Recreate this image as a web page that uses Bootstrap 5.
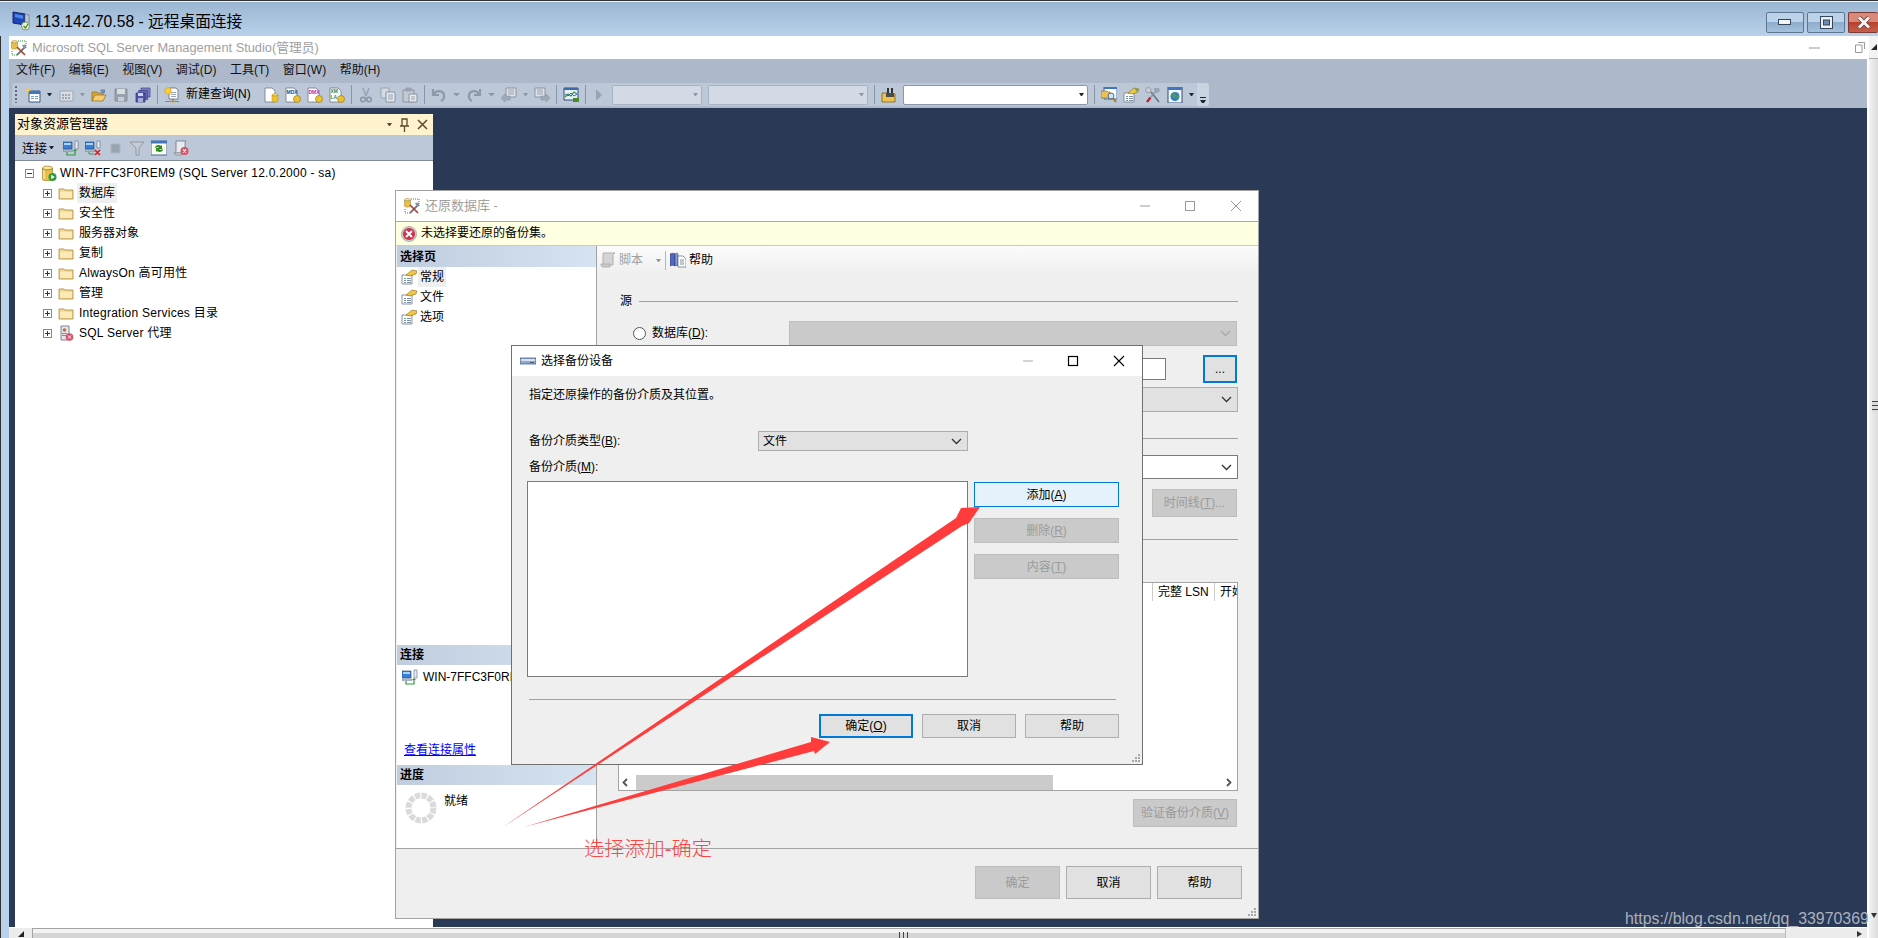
<!DOCTYPE html>
<html lang="zh-CN">
<head>
  <meta charset="UTF-8">
  <title>113.142.70.58 - 远程桌面连接</title>
  <link href="https://cdn.jsdelivr.net/npm/bootstrap@5.3.0/dist/css/bootstrap.min.css" rel="stylesheet">
  <style>
    html, body { height: 100%; }
    body {
      margin: 0; overflow: hidden; background: #b9d1ea; color: #000;
      font: 12px/1.2 "Liberation Sans", "Noto Sans CJK SC", sans-serif;
    }
    u { text-underline-offset: 1px; }
    .mh0 { min-height: 0; }
    .rdp-win { width: 1878px; height: 938px; border-top: 1px solid #333; position: relative; }
    .rdp-title {
      height: 35px; flex: none; padding-left: 12px; border-top: 1px solid #eef2f6;
      background: linear-gradient(#9bb6d2, #b9d1ea);
      font-size: 15.700px;
    }
    .rdp-title .t { margin-left: 4px; margin-top: 7px; }
    .rdp-title > svg { margin-top: 3px; }
    .rdp-btns { margin-top: 10px; align-self: flex-start; gap: 3px; }
    .rdp-b {
      width: 38px; height: 21px; border: 1px solid #5f7594; border-radius: 2px;
      background: linear-gradient(#bcd2e9 50%, #8fadcc 50%, #a4c0dc);
    }
    .rdp-b.x { width: 30px; border-right: 0; background: linear-gradient(#d9887a 50%, #b8422b 50%, #c5604c); border-color: #7c3a34; }
    .strip { width: 9px; flex: none; border-left: 1px solid #333; background: #b9d1ea; }
    .ssms { width: 1858px; flex: none; background: #fff; }
    .ssms-title { height: 23px; flex: none; padding-left: 2px; color: #a0a0a0; font-size: 12.800px; background: #fff; }
    .ssms-title .t { margin-left: 5px; }
    .ssms-ctl { margin-left: auto; gap: 35px; padding-right: 2px; }
    .mbar { height: 24px; flex: none; background: #adb9cb; padding-left: 7px; padding-bottom: 2px; color: #111; }
    .mbar span + span { margin-left: 13.500px; }
    .tbar-wrap { height: 25px; flex: none; background: #adb9cb; padding-left: 3px; padding-bottom: 2px; }
    .tbar { height: 23px; width: 1185px; background: #bcc7d8; padding-left: 3px; gap: 6px; border-radius: 3px 0 0 3px; }
    .tbar svg, .oe-tb svg { width: 16px; height: 16px; flex: none; }
    .grip { width: 4px; height: 17px; background: repeating-linear-gradient(#5e6a7d 0 2px, transparent 2px 4px); background-size: 2px 100%; background-repeat: no-repeat; }
    .dd { width: 5px; height: 3px; flex: none; border-left: 2.500px solid transparent; border-right: 2.500px solid transparent; border-top: 3px solid #1d2533; }
    .dd.off { border-top-color: #8d97a6; }
    .dd.brown { border-top-color: #5a4a2a; }
    .dd-w { width: 7px; border-width: 3px 3.500px 0; }
    .vsep { width: 1px; height: 19px; flex: none; background: #8793a6; }
    .qtxt { margin-right: 5px; width: 66px; white-space: nowrap; }
    .tb-play { margin-right: -2px; }
    .tcombo { height: 20px; width: 90px; flex: none; background: #d3dae5; border: 1px solid #a9b3c3; border-radius: 2px; padding-right: 3px; }
    .tcombo.c2 { width: 160px; }
    .tcombo.c3 { width: 185px; background: #fff; border-color: #8a96a9; }
    .tover { width: 12px; height: 23px; flex: none; background: #cad3e0; border-radius: 0 3px 3px 0; padding-bottom: 3px; }
    .tover i { display: block; width: 6px; height: 1px; background: #222; margin-bottom: 2px; }
    .tover i.dd { height: 3px; background: none; margin: 0; }
    .work { position: relative; background: #2a3956; padding: 6px 0 0 6px; min-height: 0; }
    .oe { width: 418px; height: 100%; background: #fff; }
    .oe-h { height: 21px; flex: none; background: #fff2cf; padding: 0 5px 0 2px; font-size: 13px; border-radius: 2px 2px 0 0; }
    .oe-h span { margin-top: -2px; }
    .oe-h .ctl { margin-left: auto; gap: 8px; }
    .oe-tb { height: 26px; flex: none; background: #bcc7d8; padding-left: 7px; gap: 6px; border-bottom: 1px solid #7f8a9b; font-size: 12.500px; }
    .oe-tb span { margin-top: 3px; }
    .oe-tb .dd { margin: 0 3px 0 -4px; }
    .oe-tree { padding: 2px 0 0 10px; margin: 0; list-style: none; }
    .oe-tree li { height: 20px; padding-left: 18px; gap: 6px; white-space: nowrap; }
    .oe-tree .pm { width: 9px; height: 9px; flex: none; }
    .oe-tree .fi { width: 16px; height: 16px; flex: none; margin-right: -1px; }
    .oe-tree li.root { padding-left: 0; gap: 7px; }
    .oe-tree li.root .fi { margin-right: -4px; }
    .oe-tree .ls { letter-spacing: .25px; }
    .sel-g { background: #efefef; padding: 3px 2px; margin-left: -2px; }
    .dlg { position: absolute; background: #efefef; }
    .dlg-rest { left: 386px; top: 82px; width: 864px; height: 729px; border: 1px solid #a3a3a3; }
    .dlg-title { height: 30px; flex: none; background: #fff; color: #a0a0a0; padding-left: 8px; font-size: 13px; }
    .dlg-title .t { margin-left: 5px; }
    .ctl-w { margin-left: auto; width: 140px; flex: none; }
    .ctl-w svg { width: 140px; height: 14px; flex: none; }
    .msg { height: 25px; flex: none; background: #ffffe1; border-top: 1px solid #a9a9a9; border-bottom: 1px solid #c9c9c9; padding-left: 5px; gap: 4px; }
    .msg svg { width: 16px; height: 16px; }
    .pages { width: 200px; flex: none; background: #fff; border-right: 1px solid #a3a3a3; margin-left: 1px; }
    .sec-h { height: 20px; flex: none; padding: 1px 0 0 3px; font-weight: 700; background: linear-gradient(90deg, #bfcddf, #d6e3f0); }
    .sec-h.top { height: 21px; }
    .pg { height: 20px; padding-left: 4px; gap: 3px; }
    .pg svg { width: 16px; height: 16px; flex: none; }
    .pg-sel { background: #efefef; padding: 3px 2px; margin-left: -2px; }
    .box-conn { height: 100px; flex: none; }
    .box-conn .pg { margin-top: 2px; padding-left: 5px; white-space: nowrap; gap: 5px; }
    .box-conn a { color: #00f; margin: auto 0 8px 7px; }
    .box-prog { height: 63px; flex: none; padding: 7px 0 0 8px; gap: 7px; }
    .box-prog svg { width: 32px; height: 32px; }
    .box-prog span { margin-top: 2px; }
    .rpane { min-width: 0; padding-right: 20px; }
    .rtb {
      height: 28px; flex: none; margin-right: -20px; gap: 3px; padding-left: 3px; color: #a0a0a0;
      background: linear-gradient(#fbfbfb, #efefef);
    }
    .rtb svg { width: 16px; height: 16px; flex: none; }
    .rtb .dd { margin: 0 1px 0 10px; }
    .rtb .vsep { background: #b5b5b5; margin-right: 1px; }
    .rtb .on { color: #000; }
    .grp { height: 18px; margin: 18px 0 0 23px; gap: 7px; flex: none; }
    .grp i { flex: 1; height: 1px; background: #a0a0a0; }
    .frow { flex: none; }
    .r1 { height: 25px; margin-top: 11px; padding-left: 36px; }
    .fradio { width: 13px; height: 13px; flex: none; margin: 0 6px 0 0; background: #fff; border: 1px solid #555; }
    .form-check-input.fradio:disabled { opacity: 1; }
    .r1 .flab { width: 137px; flex: none; }
    .r1 .wsel { width: 448px; flex: none; }
    .wsel {
      height: 25px; padding: 0 4px; border-radius: 0; font-size: 12px; color: #000; box-shadow: none;
      background-color: #e1e1e1; border: 1px solid #adadad; background-position: right 5px center; background-size: 11px 7px;
      background-image: url("data:image/svg+xml,%3csvg xmlns='http://www.w3.org/2000/svg' viewBox='0 0 11 7'%3e%3cpath d='M1 1l4.500 4.500L10 1' fill='none' stroke='%23333' stroke-width='1.300'/%3e%3c/svg%3e");
    }
    .wsel.off, .wsel:disabled {
      background-color: #cacaca; border-color: #bdbdbd;
      background-image: url("data:image/svg+xml,%3csvg xmlns='http://www.w3.org/2000/svg' viewBox='0 0 11 7'%3e%3cpath d='M1 1l4.500 4.500L10 1' fill='none' stroke='%23a8a8a8' stroke-width='1.300'/%3e%3c/svg%3e");
    }
    .wsel.lit { background-color: #fff; border-color: #7a7a7a; }
    .r2 { height: 28px; margin-top: 9px; }
    .txtb { width: 377px; height: 22px; margin-left: 192px; background: #fff; border: 1px solid #7a7a7a; border-radius: 0; padding: 0; flex: none; min-height: 0; }
    .wbtn {
      --bs-btn-padding-y: 0; --bs-btn-padding-x: 0; --bs-btn-font-size: 12px; --bs-btn-line-height: 1;
      --bs-btn-border-radius: 0; --bs-btn-color: #000; --bs-btn-bg: #e1e1e1; --bs-btn-border-color: #adadad;
      --bs-btn-disabled-opacity: 1; --bs-btn-disabled-bg: #cacaca; --bs-btn-disabled-border-color: #bdbdbd; --bs-btn-disabled-color: #9a9a9a;
      font-family: inherit; flex: none;
    }
    .wbtn.focus-b { border: 2px solid #0078d7; }
    .wbtn.hot { background: #e5f1fb; border-color: #0078d7; }
    .dots { width: 34px; height: 28px; margin-left: 37px; line-height: 18px; }
    .r3 { height: 25px; margin-top: 4px; margin-left: 192px; }
    .r4 { height: 1px; margin: 26px 0 0 23px; background: #a0a0a0; }
    .r5 { height: 24px; margin: 16px 0 0 192px; }
    .r6 { margin-top: 10px; height: 28px; }
    .tl { width: 85px; height: 28px; margin-left: auto; margin-right: 1px; }
    .r7 { height: 1px; margin: 22px 0 0 23px; background: #a0a0a0; }
    .tb-b { height: 209px; margin: 42px 0 0 21px; background: #fff; border: 1px solid #a3a3a3; }
    .tb-head { height: 18px; flex: none; padding-left: 533px; white-space: nowrap; overflow: hidden; }
    .tb-head span { border-left: 1px solid #ccc; padding-left: 5px; height: 100%; flex: none; }
    .tb-head .lsn { width: 62px; }
    .tb-sc { height: 15px; margin-top: auto; flex: none; margin-bottom: 0; padding: 0 5px 0 3px; }
    .tb-sc .th { width: 417px; height: 15px; background: #cbcbcb; margin-left: 8px; flex: none; }
    .tb-sc svg { width: 6px; height: 9px; flex: none; }
    .r8 { height: 28px; margin-top: 8px; }
    .ver { width: 104px; height: 28px; margin-left: auto; margin-right: 1px; }
    .dlg-foot { height: 70px; flex: none; border-top: 1px solid #a3a3a3; gap: 6px; padding: 17px 16px 0 0; position: relative; }
    .dlg-foot .wbtn { width: 85px; height: 33px; }
    .rs-grip { position: absolute; right: 1px; bottom: 1px; width: 10px; height: 10px; }
    .dlg-inner { left: 115px; top: 154px; width: 632px; height: 420px; border: 1px solid #707070; }
    .dlg-inner .dlg-title { color: #000; height: 30px; font-size: 12px; }
    .dlg-inner .body-p { padding: 0 23px 0 17px; }
    .l1 { margin-top: 12px; height: 14px; }
    .l2 { margin-top: 29px; height: 20px; }
    .l2 .flab2 { width: 229px; }
    .l2 .wsel { width: 210px; height: 20px; min-height: 0; line-height: 1; }
    .l3 { margin-top: 10px; height: 13px; line-height: 13px; }
    .l4 { margin-top: 7px; margin-left: -2px; gap: 6px; height: 196px; }
    .dlist { width: 441px; background: #fff; border: 1px solid #7a7a7a; border-radius: 0; }
    .sidebtns { width: 145px; gap: 11px; padding-top: 1px; }
    .sidebtns .wbtn { height: 25px; }
    .l5 { margin-top: 22px; height: 1px; background: #a0a0a0; margin-right: 3px; }
    .l6 { margin-top: 14px; gap: 9px; justify-content: flex-end; }
    .l6 .wbtn { width: 94px; height: 24px; }
    .rsb { width: 11px; flex: none; background: #fff; padding-left: 2px; }
    .rsb-in { height: 100%; background: linear-gradient(90deg, #f2f2f2, #dcdcdc); position: relative; }
    .rsb-top { height: 23px; background: #f2f2f2; border-bottom: 1px solid #aaa; padding: 8px 0 0 2px; }
    .rsb-gr { position: absolute; top: 365px; left: 3px; width: 6px; height: 11px; background: repeating-linear-gradient(#444 0 1px, #ddd 1px 4px); }
    .tri-up { width: 0; height: 0; border-left: 6px solid transparent; border-bottom: 6px solid #222; }
    .tri-dn { position: absolute; top: 877px; left: 2px; width: 0; height: 0; border-left: 3px solid transparent; border-right: 3px solid transparent; border-top: 5px solid #333; }
    .bsb { height: 11px; flex: none; border-top: 1px solid #fff; background: #ececec; position: relative; }
    .bsb-corner { width: 23px; flex: none; background: #ececec; padding: 3px 0 0 9px; }
    .bsb-corner .c { width: 0; height: 0; border-right: 6px solid #222; border-top: 6px solid transparent; }
    .bsb-th { width: 1754px; flex: none; border: 1px solid #a4a4a4; border-bottom: 0; border-right-color: #bbb; background: linear-gradient(#f2f2f2 40%, #d5d5d5 40%); padding-left: 866px; padding-top: 3px; }
    .bsb-th i { display: block; width: 9px; height: 7px; background: repeating-linear-gradient(90deg, #444 0 1px, transparent 1px 4px); }
    .bsb-end { padding: 3px 5px 0 0; margin-left: auto; }
    .bsb-end i { display: block; width: 0; height: 0; border-left: 5px solid #333; border-top: 3px solid transparent; border-bottom: 3px solid transparent; }
    .overlay { position: absolute; left: 0; top: -1px; width: 1878px; height: 938px; pointer-events: none; }
    .note { position: absolute; left: 584px; top: 835px; font-size: 20.200px; line-height: 26px; color: #ff4242; font-weight: 300; white-space: nowrap; }
    .wm { position: absolute; left: 1625px; top: 908px; font-size: 15.900px; line-height: 20px; color: #aab1bd; white-space: nowrap; }
  </style>
</head>
<body>
<svg class="d-none" xmlns="http://www.w3.org/2000/svg">
  <symbol id="i-folder" viewBox="0 0 16 16"><path d="M1 4h5l1 1h8v9H1z" fill="#f5d98f" stroke="#a8873e" stroke-width=".8"/><path d="M2 7h12v6H2z" fill="#fbe9b7"/></symbol>
  <symbol id="i-new" viewBox="0 0 16 16"><path d="M4 4h11v11H4z" fill="#fff" stroke="#345a8c"/><path d="M4 4h11v3H4z" fill="#3f76c4"/><path d="M6 9h3v1H6zM6 11h3v1H6zM10 9h3v1h-3zM10 11h3v1h-3z" fill="#7c9cc4"/><path d="M3 0l1 2 2 1-2 1-1 2-1-2-2-1 2-1z" fill="#f6cf3c"/></symbol>
  <symbol id="i-grid" viewBox="0 0 16 16"><path d="M2 4h13v10H2z" fill="#d9dee6" stroke="#a0a7b3"/><path d="M4 7h2v2H4zM7 7h2v2H7zM10 7h2v2h-2zM4 10h2v2H4zM7 10h2v2H7zM10 10h2v2h-2z" fill="#a0a7b3"/></symbol>
  <symbol id="i-open" viewBox="0 0 16 16"><path d="M1 5h5l1 1h5v3H4L1 14z" fill="#d9a83a" stroke="#8a6a22" stroke-width=".7"/><path d="M1 14l3-6h11l-3 6z" fill="#f4cf72" stroke="#8a6a22" stroke-width=".7"/><path d="M9 4c1-2 3-2 4-1l1-1v4h-4l1-1c-.5-1-1.500-1-2-1z" fill="#6f87a8"/></symbol>
  <symbol id="i-save" viewBox="0 0 16 16"><path d="M2 2h12v12H2z" fill="#98a1ae" stroke="#7d8693" stroke-width=".8"/><path d="M4 2h8v5H4z" fill="#d8dde4"/><path d="M5 10h6v4H5z" fill="#c6ccd5"/></symbol>
  <symbol id="i-saveall" viewBox="0 0 16 16"><path d="M6 1h9v9H6z" fill="#7a7fc4" stroke="#3f4388" stroke-width=".7"/><path d="M3.500 3.500h9v9h-9z" fill="#6268b4" stroke="#3f4388" stroke-width=".7"/><path d="M1 6h9v9H1z" fill="#4f55a5" stroke="#2d3072" stroke-width=".7"/><path d="M3 6h5v3H3z" fill="#cfd2ee"/><path d="M3 11h5v4H3z" fill="#a8abd8"/></symbol>
  <symbol id="i-newq" viewBox="0 0 16 16"><path d="M5 1h7l2 2v9H5z" fill="#fff" stroke="#5d6a7f" stroke-width=".8"/><path d="M7 5h5v1H7zM7 7h5v1H7zM7 9h5v1H7z" fill="#9aa6b8"/><circle cx="4" cy="4" r="3.300" fill="#f5cf3e" stroke="#d8941e" stroke-width=".6"/><path d="M1 14.500h14" stroke="#a8873e"/><path d="M9 12v2.500" stroke="#5d6a7f"/><circle cx="9" cy="14.500" r="1.200" fill="#d8941e"/></symbol>
  <symbol id="i-docdb" viewBox="0 0 16 16"><path d="M2 1h7l3 3v11H2z" fill="#fff" stroke="#6e7888" stroke-width=".8"/><ellipse cx="12" cy="8" rx="3" ry="1.300" fill="#f7e07a" stroke="#a8871c" stroke-width=".5"/><path d="M9 8v6c0 1.500 6 1.500 6 0V8c0 1.300-6 1.300-6 0z" fill="#eec22e" stroke="#a8871c" stroke-width=".5"/></symbol>
  <symbol id="i-mdx" viewBox="0 0 16 16"><path d="M1 1h8l3 3v11H1z" fill="#fff" stroke="#6e7888" stroke-width=".8"/><text x="1.500" y="7" font-size="5" font-weight="700" font-family="Liberation Sans" fill="#20468c">MDX</text><circle cx="12" cy="12" r="3.500" fill="#eec22e" stroke="#8a6f12" stroke-width=".6"/></symbol>
  <symbol id="i-dmx" viewBox="0 0 16 16"><path d="M1 1h8l3 3v11H1z" fill="#fff" stroke="#6e7888" stroke-width=".8"/><text x="1.500" y="7" font-size="5" font-weight="700" font-family="Liberation Sans" fill="#b02eb0">DMX</text><circle cx="12" cy="12" r="3.500" fill="#eec22e" stroke="#8a6f12" stroke-width=".6"/></symbol>
  <symbol id="i-xml" viewBox="0 0 16 16"><path d="M1 1h8l3 3v11H1z" fill="#fff" stroke="#6e7888" stroke-width=".8"/><text x="1.500" y="6" font-size="5" font-weight="700" font-family="Liberation Sans" fill="#1a8a5a">XM</text><text x="1.500" y="11.500" font-size="5" font-weight="700" font-family="Liberation Sans" fill="#1a8a5a">LA</text><circle cx="12" cy="12" r="3.500" fill="#eec22e" stroke="#8a6f12" stroke-width=".6"/></symbol>
  <symbol id="i-cut" viewBox="0 0 16 16"><path d="M5 1l3 8M11 1L8 9" stroke="#9aa3b0" stroke-width="1.600" fill="none"/><circle cx="5" cy="12.500" r="2.300" fill="none" stroke="#8a93a0" stroke-width="1.500"/><circle cx="11" cy="12.500" r="2.300" fill="none" stroke="#8a93a0" stroke-width="1.500"/></symbol>
  <symbol id="i-copy" viewBox="0 0 16 16"><path d="M1 1h8v10H1z" fill="#d5dae2" stroke="#9aa3b0"/><path d="M6 5h9v10H6z" fill="#e6e9ee" stroke="#8a93a0"/><path d="M8 8h5M8 10h5M8 12h5" stroke="#9aa3b0"/></symbol>
  <symbol id="i-paste" viewBox="0 0 16 16"><path d="M1 3h11v12H1z" fill="#c4cad4" stroke="#8a93a0"/><path d="M4 1h5v3H4z" fill="#a2aab6" stroke="#8a93a0" stroke-width=".7"/><path d="M7 7h8v8H7z" fill="#e6e9ee" stroke="#8a93a0"/><path d="M9 10h4M9 12h4" stroke="#9aa3b0"/></symbol>
  <symbol id="i-undo" viewBox="0 0 16 16"><path d="M2 2v6h6M3 7c2-4 9-4 10 1 .5 3-1 5-3 6" fill="none" stroke="#8f98a6" stroke-width="2.200"/></symbol>
  <symbol id="i-redo" viewBox="0 0 16 16"><path d="M14 2v6H8M13 7c-2-4-9-4-10 1-.5 3 1 5 3 6" fill="none" stroke="#8f98a6" stroke-width="2.200"/></symbol>
  <symbol id="i-back" viewBox="0 0 16 16"><path d="M5 1h10v9H5z" fill="#dfe3ea" stroke="#8a93a0"/><path d="M7 3h6M7 5h6M7 7h6" stroke="#9aa3b0"/><path d="M0 11l4-4v2h5v4H4v2z" fill="#a2aab6" stroke="#858e9b" stroke-width=".5"/></symbol>
  <symbol id="i-fwd" viewBox="0 0 16 16"><path d="M1 1h10v9H1z" fill="#dfe3ea" stroke="#8a93a0"/><path d="M3 3h6M3 5h6M3 7h6" stroke="#9aa3b0"/><path d="M16 11l-4-4v2H7v4h5v2z" fill="#a2aab6" stroke="#858e9b" stroke-width=".5"/></symbol>
  <symbol id="i-chart" viewBox="0 0 16 16"><path d="M1 1h14v12H1z" fill="#e9f1f6" stroke="#2e4f7a"/><path d="M1 1h14v2H1z" fill="#3c6aa8"/><path d="M2 10l3-3 3 2 3-4 3 2" fill="none" stroke="#2a9a3a" stroke-width="1.200"/><path d="M2 7l3 2 3-3 3 3 3-2" fill="none" stroke="#3a6ac0"/><path d="M10 11h6v4h-6z" fill="#4a8a2a"/></symbol>
  <symbol id="i-play" viewBox="0 0 16 16"><path d="M4 2l6 6-6 6z" fill="#9aa3b0"/></symbol>
  <symbol id="i-bino" viewBox="0 0 16 16"><path d="M1 6h5l1 1h7v8H1z" fill="#eec04f" stroke="#7a5e1e" stroke-width=".8"/><path d="M6 1h2v8H6zM10 1h2v8h-2z" fill="#333"/><path d="M5 6h4v4H5zM9 6h4v4H9z" fill="#4a4a4a"/></symbol>
  <symbol id="i-find" viewBox="0 0 16 16"><path d="M3 0h13v12H3z" fill="#fff" stroke="#3a66a8"/><path d="M3 0h13v2H3z" fill="#3f76c4"/><path d="M0 4h6l1 1h2v6H0z" fill="#eec04f" stroke="#8a6a22" stroke-width=".6"/><circle cx="10" cy="9" r="3" fill="#cfe4f7" stroke="#4a6a8a"/><path d="M12 11l3 4" stroke="#a87a2a" stroke-width="2"/></symbol>
  <symbol id="i-prop" viewBox="0 0 16 16"><path d="M1 6h10v9H1z" fill="#fff" stroke="#6e7888" stroke-width=".8"/><path d="M3 9h2v1H3zM6 9h4v1H6zM3 11h2v1H3zM6 11h4v1H6zM3 13h2v1H3zM6 13h4v1H6z" fill="#7c8ea8"/><path d="M5 6l6-5 5 1-1 3-6 2z" fill="#efc840" stroke="#8a6a22" stroke-width=".6"/><path d="M11 1l5 1-2 3z" fill="#7ba050"/></symbol>
  <symbol id="i-tools" viewBox="0 0 16 16"><path d="M14 15L6 5" stroke="#6a7482" stroke-width="1.600"/><path d="M2 15l3.500-4.500" stroke="#b8252a" stroke-width="2.400"/><path d="M6 10l5-6" stroke="#8a93a0" stroke-width="1.400"/><path d="M9 1h5l1 3-3 2-3-3z" fill="#9aa3b0"/><path d="M2 1c2-1 4 0 4 3l-2 2-3-1c-1-2 0-3 1-4z" fill="#c8ced7" stroke="#6a7482" stroke-width=".5"/></symbol>
  <symbol id="i-web" viewBox="0 0 16 16"><path d="M1 0h14v16H1z" fill="#f3f6fa" stroke="#2e4f7a"/><path d="M1 0h14v3H1z" fill="#3f76c4"/><circle cx="8" cy="9.500" r="4.500" fill="#2f7fc0"/><path d="M5 7l3-1 1 3-2 3-1-2zM9 10l2-2 1 2-2 2z" fill="#4fa04a"/></symbol>
  <symbol id="i-conn" viewBox="0 0 16 16"><path d="M0 2h9v7H0z" fill="#3a7fd5" stroke="#2e4f7a" stroke-width=".7"/><path d="M1 3h7v2H1z" fill="#a8d2f5"/><path d="M0 10h10v1.500H0z" fill="#bfc7d2" stroke="#5d6a7f" stroke-width=".4"/><path d="M12 1h3v8h-3z" fill="#e8ebf0" stroke="#5d6a7f" stroke-width=".6"/><path d="M4 12v3h8v-4" fill="none" stroke="#2f9a3a" stroke-width="1.200"/><path d="M10 11l2-2 2 2z" fill="#2f9a3a"/></symbol>
  <symbol id="i-disc" viewBox="0 0 16 16"><path d="M0 2h9v7H0z" fill="#3a7fd5" stroke="#2e4f7a" stroke-width=".7"/><path d="M1 3h7v2H1z" fill="#a8d2f5"/><path d="M0 10h10v1.500H0z" fill="#bfc7d2" stroke="#5d6a7f" stroke-width=".4"/><path d="M12 1h3v7h-3z" fill="#e8ebf0" stroke="#5d6a7f" stroke-width=".6"/><path d="M4 12v2h5" fill="none" stroke="#2f9a3a"/><path d="M10 10l5 5M15 10l-5 5" stroke="#d81c1c" stroke-width="1.600"/></symbol>
  <symbol id="i-stop" viewBox="0 0 16 16"><path d="M4 4h9v9H4z" fill="#9aa3b0" stroke="#adb5c1"/></symbol>
  <symbol id="i-funnel" viewBox="0 0 16 16"><path d="M1 2h14L10 8v7H7V8z" fill="#c6ccd5" stroke="#8f98a6"/></symbol>
  <symbol id="i-refresh" viewBox="0 0 16 16"><path d="M0 1h16v14H0z" fill="#fdfde9" stroke="#3a66a8"/><path d="M0 1h16v2.500H0z" fill="#3f76c4"/><path d="M4 8c0-3 4-4 6-2l1-1v4H7l1-1c-1-1-2-1-4 0z" fill="#2f8a2a"/><path d="M12 9c0 3-4 4-6 2l-1 1V8h4l-1 1c1 1 2 1 4 0z" fill="#2f8a2a"/></symbol>
  <symbol id="i-scrx" viewBox="0 0 16 16"><path d="M3 1h10c-1 1-1 2-1 3v9H2c1-1 1-2 1-3z" fill="#e8ebf0" stroke="#6a7482" stroke-width=".8"/><path d="M1 13h8v2H3c-1 0-2-1-2-2z" fill="#d2d7df" stroke="#6a7482" stroke-width=".6"/><circle cx="11.500" cy="11" r="4" fill="#d9506a"/><path d="M10 9.500l3 3M13 9.500l-3 3" stroke="#fff" stroke-width="1.200"/></symbol>
  <symbol id="i-srv" viewBox="0 0 16 16"><ellipse cx="6.500" cy="3" rx="5" ry="2" fill="#f8e49a" stroke="#99802a" stroke-width=".7"/><path d="M1.500 3v11c0 2.500 10 2.500 10 0V3c0 2.500-10 2.500-10 0z" fill="#e8bf4a" stroke="#99802a" stroke-width=".7"/><path d="M3 5v9" stroke="#f8e49a" stroke-width="1.500"/><circle cx="11.500" cy="12" r="4" fill="#2f9a3a"/><path d="M10.300 9.800l3.400 2.200-3.400 2.200z" fill="#fff"/></symbol>
  <symbol id="i-agent" viewBox="0 0 16 16"><path d="M3 1h8v14H3z" fill="#e3e7ee" stroke="#5d6a7f" stroke-width=".8"/><circle cx="6.500" cy="5" r="1.800" fill="#c76a30"/><path d="M4 8h5v1H4zM4 10h5v1H4z" fill="#7c8ea8"/><circle cx="11.500" cy="12" r="3.800" fill="#d9506a"/><path d="M10 10.500l3 3M13 10.500l-3 3" stroke="#fff"/></symbol>
  <symbol id="i-ssms" viewBox="0 0 16 16"><path d="M7 1h1M9 1h1M11 1h1M13 1h1M15 1v1M15 3v1M15 5v1M15 7v1M1 11v1M1 13v1M1 15h1M3 15h1M5 15h1" stroke="#2f9a3a" stroke-width="1"/><ellipse cx="3.500" cy="1.800" rx="3" ry="1.300" fill="#f8e49a" stroke="#99802a" stroke-width=".5"/><path d="M.5 2v6c0 1.500 6 1.500 6 0V2c0 1.300-6 1.300-6 0z" fill="#e8bf4a" stroke="#99802a" stroke-width=".5"/><path d="M6 15l8-8" stroke="#777" stroke-width="1.800"/><path d="M14 15L6 7" stroke="#a83a2a" stroke-width="1.600"/><path d="M11 5l4-.5L15 8l-2 1z" fill="#8a93a0"/></symbol>
  <symbol id="i-pg" viewBox="0 0 16 16"><path d="M1 6h10v9H1z" fill="#fff" stroke="#6e7888" stroke-width=".8"/><path d="M3 9h2v1H3zM6 9h4v1H6zM3 11h2v1H3zM6 11h4v1H6zM3 13h2v1H3zM6 13h4v1H6z" fill="#7c8ea8"/><path d="M5 6l6-5 5 1-1 3-6 2z" fill="#efc840" stroke="#8a6a22" stroke-width=".6"/></symbol>
  <symbol id="i-err" viewBox="0 0 16 16"><circle cx="8" cy="8" r="7.600" fill="#c9c9c9" stroke="#8a8a8a" stroke-width=".5"/><circle cx="8" cy="8" r="6" fill="#cc3347"/><path d="M5 5l6 6M11 5l-6 6" stroke="#fff" stroke-width="2"/></symbol>
  <symbol id="i-scr" viewBox="0 0 16 16"><path d="M3 1h12c-1.500 1-2 2-2 3v9H2c1-1 1-2 1-3z" fill="#d4d4d4" stroke="#b0b0b0"/><path d="M1 12h9v3H3c-1 0-2-1-2-3z" fill="#cacaca" stroke="#b0b0b0"/></symbol>
  <symbol id="i-help" viewBox="0 0 16 16"><path d="M0 2c2-1 4-1 5 0v12c-1-1-3-1-5 0z" fill="#5568b8" stroke="#2d3a80" stroke-width=".6"/><path d="M5 2c1-1 2-1 3 0v12c-1-1-2-1-3 0z" fill="#8a98d8" stroke="#2d3a80" stroke-width=".6"/><path d="M8 4h5l3 3v8H8z" fill="#fff" stroke="#5d6a7f" stroke-width=".7"/><path d="M10 8h4M10 10h4M10 12h4" stroke="#7c8ea8"/></symbol>
  <symbol id="i-dev" viewBox="0 0 16 16"><path d="M0 5h16v6H0z" fill="#8fa8cc" stroke="#47628c" stroke-width=".8"/><path d="M1 6h14v2H1z" fill="#d5e0ef"/><path d="M10 9h4v1h-4z" fill="#47628c"/></symbol>
  <symbol id="i-plus" viewBox="0 0 9 9"><rect x=".5" y=".5" width="8" height="8" fill="#fff" stroke="#888"/><path d="M2 4.500h5M4.500 2v5" stroke="#333"/></symbol>
  <symbol id="i-grip" viewBox="0 0 10 10"><path d="M7 1h2v2H7zM4 4h2v2H4zM7 4h2v2H7zM1 7h2v2H1zM4 7h2v2H4zM7 7h2v2H7z" fill="#a8a8a8"/></symbol>
</svg>

<div class="rdp-win d-flex flex-column">
  <div class="rdp-title d-flex align-items-center">
    <svg width="19" height="20" viewBox="0 0 19 20"><path d="M1 1l12 2v11L1 12z" fill="#1f45b8" stroke="#112766"/><path d="M3 3l8 1.500V8L3 6z" fill="#4f86e8"/><path d="M13 3l4 1v11l-4-1z" fill="#bcc6d6" stroke="#5d6a7f" stroke-width=".6"/><circle cx="13.500" cy="15" r="4" fill="#eef2e4" stroke="#7a9a5a"/><path d="M11.500 15l2 2 2.500-4" fill="none" stroke="#3d8a2a" stroke-width="1.300"/></svg>
    <span class="t">113.142.70.58 - 远程桌面连接</span>
    <div class="rdp-btns d-flex ms-auto">
      <div class="rdp-b d-flex align-items-center justify-content-center"><svg width="14" height="7" viewBox="0 0 14 7"><rect x=".5" y=".5" width="12" height="5" fill="#f4f4f4" stroke="#33465f"/></svg></div>
      <div class="rdp-b d-flex align-items-center justify-content-center"><svg width="13" height="13" viewBox="0 0 13 13"><rect x=".5" y=".5" width="12" height="12" fill="#eee" stroke="#33465f"/><rect x="3.500" y="4" width="6" height="5" fill="#6f8ab0" stroke="#33465f"/></svg></div>
      <div class="rdp-b x d-flex align-items-center justify-content-center"><svg width="14" height="13" viewBox="0 0 14 13"><path d="M2 1.500l10 10M12 1.500l-10 10" stroke="#5b3a3a" stroke-width="4.400"/><path d="M2 1.500l10 10M12 1.500l-10 10" stroke="#f4f4f4" stroke-width="3"/></svg></div>
    </div>
  </div>

  <div class="d-flex flex-grow-1 mh0">
    <div class="strip"></div>
    <div class="ssms d-flex flex-column">
      <div class="ssms-title d-flex align-items-center">
        <svg width="16" height="16"><use href="#i-ssms"/></svg>
        <span class="t">Microsoft SQL Server Management Studio(管理员)</span>
        <div class="ssms-ctl d-flex align-items-center">
          <svg width="11" height="2" viewBox="0 0 11 2"><path d="M0 1h11" stroke="#999"/></svg>
          <svg width="10" height="11" viewBox="0 0 10 11"><path d="M3 .5h6.500V7M.5 3h6.500v7.500H.5z" fill="none" stroke="#999"/></svg>
        </div>
      </div>

      <div class="mbar d-flex align-items-center">
        <span>文件(F)</span><span>编辑(E)</span><span>视图(V)</span><span>调试(D)</span><span>工具(T)</span><span>窗口(W)</span><span>帮助(H)</span>
      </div>

      <div class="tbar-wrap d-flex">
        <div class="tbar d-flex align-items-center">
          <div class="grip"></div>
          <svg><use href="#i-new"/></svg><i class="dd"></i>
          <svg><use href="#i-grid"/></svg><i class="dd off"></i>
          <svg><use href="#i-open"/></svg>
          <svg><use href="#i-save"/></svg>
          <svg><use href="#i-saveall"/></svg>
          <div class="vsep"></div>
          <svg><use href="#i-newq"/></svg>
          <span class="qtxt">新建查询(N)</span>
          <svg><use href="#i-docdb"/></svg>
          <svg><use href="#i-mdx"/></svg>
          <svg><use href="#i-dmx"/></svg>
          <svg><use href="#i-xml"/></svg>
          <div class="vsep"></div>
          <svg><use href="#i-cut"/></svg>
          <svg><use href="#i-copy"/></svg>
          <svg><use href="#i-paste"/></svg>
          <div class="vsep"></div>
          <svg><use href="#i-undo"/></svg><i class="dd dd-w off"></i>
          <svg><use href="#i-redo"/></svg><i class="dd dd-w off"></i>
          <svg><use href="#i-back"/></svg><i class="dd off"></i>
          <svg><use href="#i-fwd"/></svg>
          <div class="vsep"></div>
          <svg><use href="#i-chart"/></svg>
          <div class="vsep"></div>
          <svg class="tb-play"><use href="#i-play"/></svg>
          <div class="tcombo d-flex align-items-center justify-content-end"><i class="dd off"></i></div>
          <div class="tcombo c2 d-flex align-items-center justify-content-end"><i class="dd off"></i></div>
          <div class="vsep"></div>
          <svg><use href="#i-bino"/></svg>
          <div class="tcombo c3 d-flex align-items-center justify-content-end"><i class="dd"></i></div>
          <div class="vsep"></div>
          <svg><use href="#i-find"/></svg>
          <svg><use href="#i-prop"/></svg>
          <svg><use href="#i-tools"/></svg>
          <svg><use href="#i-web"/></svg><i class="dd"></i>
        </div>
        <div class="tover d-flex flex-column align-items-center justify-content-end"><i></i><i class="dd"></i></div>
      </div>

      <div class="work flex-grow-1">
        <div class="oe d-flex flex-column">
          <div class="oe-h d-flex align-items-center">
            <span>对象资源管理器</span>
            <div class="ctl d-flex align-items-center">
              <i class="dd brown"></i>
              <svg width="9" height="14" viewBox="0 0 9 14"><path d="M2 1h5v7H2zM0 8h9M4.500 8v6" fill="none" stroke="#5a4a2a" stroke-width="1.300"/></svg>
              <svg width="11" height="11" viewBox="0 0 11 11"><path d="M1 1l9 9M10 1l-9 9" stroke="#5a4a2a" stroke-width="1.500"/></svg>
            </div>
          </div>
          <div class="oe-tb d-flex align-items-center">
            <span>连接</span><i class="dd"></i>
            <svg><use href="#i-conn"/></svg>
            <svg><use href="#i-disc"/></svg>
            <svg><use href="#i-stop"/></svg>
            <svg><use href="#i-funnel"/></svg>
            <svg><use href="#i-refresh"/></svg>
            <svg><use href="#i-scrx"/></svg>
          </div>
          <ul class="oe-tree">
            <li class="root d-flex align-items-center"><svg class="pm" viewBox="0 0 9 9"><rect x=".5" y=".5" width="8" height="8" fill="#fff" stroke="#888"/><path d="M2 4.500h5" stroke="#333"/></svg><svg class="fi"><use href="#i-srv"/></svg><span class="ls">WIN-7FFC3F0REM9 (SQL Server 12.0.2000 - sa)</span></li>
            <li class="d-flex align-items-center"><svg class="pm"><use href="#i-plus"/></svg><svg class="fi"><use href="#i-folder"/></svg><span class="sel-g">数据库</span></li>
            <li class="d-flex align-items-center"><svg class="pm"><use href="#i-plus"/></svg><svg class="fi"><use href="#i-folder"/></svg><span>安全性</span></li>
            <li class="d-flex align-items-center"><svg class="pm"><use href="#i-plus"/></svg><svg class="fi"><use href="#i-folder"/></svg><span>服务器对象</span></li>
            <li class="d-flex align-items-center"><svg class="pm"><use href="#i-plus"/></svg><svg class="fi"><use href="#i-folder"/></svg><span>复制</span></li>
            <li class="d-flex align-items-center"><svg class="pm"><use href="#i-plus"/></svg><svg class="fi"><use href="#i-folder"/></svg><span class="ls">AlwaysOn 高可用性</span></li>
            <li class="d-flex align-items-center"><svg class="pm"><use href="#i-plus"/></svg><svg class="fi"><use href="#i-folder"/></svg><span>管理</span></li>
            <li class="d-flex align-items-center"><svg class="pm"><use href="#i-plus"/></svg><svg class="fi"><use href="#i-folder"/></svg><span class="ls">Integration Services 目录</span></li>
            <li class="d-flex align-items-center"><svg class="pm"><use href="#i-plus"/></svg><svg class="fi"><use href="#i-agent"/></svg><span class="ls">SQL Server 代理</span></li>
          </ul>
        </div>

        <!-- 还原数据库 -->
        <div class="dlg dlg-rest d-flex flex-column">
          <div class="dlg-title d-flex align-items-center">
            <svg width="16" height="16"><use href="#i-ssms"/></svg>
            <span class="t">还原数据库 -</span>
            <div class="ctl-w d-flex">
              <svg viewBox="0 0 140 14"><path d="M22 7h10" stroke="#999"/><rect x="67.500" y="2.500" width="9" height="9" fill="none" stroke="#999"/><path d="M113 2l10 10M123 2l-10 10" stroke="#999"/></svg>
            </div>
          </div>
          <div class="msg d-flex align-items-center"><svg><use href="#i-err"/></svg><span>未选择要还原的备份集。</span></div>
          <div class="d-flex flex-grow-1 mh0">
            <div class="pages d-flex flex-column">
              <div class="sec-h top d-flex align-items-center">选择页</div>
              <div class="pg d-flex align-items-center"><svg><use href="#i-pg"/></svg><span class="pg-sel">常规</span></div>
              <div class="pg d-flex align-items-center"><svg><use href="#i-pg"/></svg><span>文件</span></div>
              <div class="pg d-flex align-items-center"><svg><use href="#i-pg"/></svg><span>选项</span></div>
              <div class="flex-grow-1"></div>
              <div class="sec-h d-flex align-items-center">连接</div>
              <div class="box-conn d-flex flex-column">
                <div class="pg d-flex align-items-center"><svg><use href="#i-conn"/></svg><span>WIN-7FFC3F0REM9</span></div>
                <a href="#">查看连接属性</a>
              </div>
              <div class="sec-h d-flex align-items-center">进度</div>
              <div class="box-prog d-flex">
                <svg viewBox="0 0 32 32"><circle cx="16" cy="16" r="12.500" fill="none" stroke="#dadada" stroke-width="6" stroke-dasharray="5.300 1.250"/></svg>
                <span>就绪</span>
              </div>
            </div>
            <div class="rpane flex-grow-1 d-flex flex-column">
              <div class="rtb d-flex align-items-center">
                <svg><use href="#i-scr"/></svg><span>脚本</span><i class="dd off"></i>
                <div class="vsep"></div>
                <svg><use href="#i-help"/></svg><span class="on">帮助</span>
              </div>
              <div class="grp d-flex align-items-center"><span>源</span><i></i></div>
              <div class="r1 frow d-flex align-items-center">
                <input class="form-check-input fradio" type="radio" disabled>
                <span class="flab">数据库(<u>D</u>):</span>
                <select class="form-select wsel" disabled></select>
              </div>
              <div class="r2 frow d-flex align-items-center">
                <input class="form-control txtb" type="text">
                <button class="btn wbtn focus-b dots" type="button">...</button>
              </div>
              <div class="r3 frow"><select class="form-select wsel"></select></div>
              <div class="r4 frow"></div>
              <div class="r5 frow"><select class="form-select wsel lit h-100"></select></div>
              <div class="r6 frow d-flex"><button class="btn wbtn tl" type="button" disabled>时间线(<u>T</u>)...</button></div>
              <div class="r7 frow"></div>
              <div class="tb-b frow d-flex flex-column">
                <div class="tb-head d-flex align-items-center"><span class="lsn d-flex align-items-center">完整 LSN</span><span class="d-flex align-items-center">开始</span></div>
                <div class="tb-sc d-flex align-items-center">
                  <svg viewBox="0 0 6 9"><path d="M5 1L1.500 4.500 5 8" fill="none" stroke="#555" stroke-width="1.800"/></svg>
                  <div class="th"></div>
                  <svg class="ms-auto" viewBox="0 0 6 9"><path d="M1 1l3.500 3.500L1 8" fill="none" stroke="#555" stroke-width="1.800"/></svg>
                </div>
              </div>
              <div class="r8 frow d-flex"><button class="btn wbtn ver" type="button" disabled>验证备份介质(<u>V</u>)</button></div>
            </div>
          </div>
          <div class="dlg-foot d-flex justify-content-end">
            <button class="btn wbtn" type="button" disabled>确定</button>
            <button class="btn wbtn" type="button">取消</button>
            <button class="btn wbtn" type="button">帮助</button>
            <svg class="rs-grip"><use href="#i-grip"/></svg>
          </div>

          <!-- 选择备份设备 -->
          <div class="dlg dlg-inner d-flex flex-column">
            <div class="dlg-title d-flex align-items-center">
              <svg width="16" height="16"><use href="#i-dev"/></svg>
              <span class="t">选择备份设备</span>
              <div class="ctl-w d-flex">
                <svg viewBox="0 0 140 14"><path d="M21 7h10" stroke="#aaa"/><rect x="66.500" y="2.500" width="9" height="9" fill="none" stroke="#000" stroke-width="1.200"/><path d="M112 2l10 10M122 2l-10 10" stroke="#000" stroke-width="1.100"/></svg>
              </div>
            </div>
            <div class="body-p d-flex flex-column flex-grow-1 position-relative">
              <div class="l1">指定还原操作的备份介质及其位置。</div>
              <div class="l2 d-flex align-items-center">
                <span class="flab2">备份介质类型(<u>B</u>):</span>
                <select class="form-select wsel"><option>文件</option></select>
              </div>
              <div class="l3">备份介质(<u>M</u>):</div>
              <div class="l4 d-flex">
                <div class="dlist"></div>
                <div class="sidebtns d-flex flex-column">
                  <button class="btn wbtn hot" type="button">添加(<u>A</u>)</button>
                  <button class="btn wbtn" type="button" disabled>删除(<u>R</u>)</button>
                  <button class="btn wbtn" type="button" disabled>内容(<u>T</u>)</button>
                </div>
              </div>
              <div class="l5"></div>
              <div class="l6 d-flex">
                <button class="btn wbtn focus-b" type="button">确定(<u>O</u>)</button>
                <button class="btn wbtn" type="button">取消</button>
                <button class="btn wbtn" type="button">帮助</button>
              </div>
              <svg class="rs-grip"><use href="#i-grip"/></svg>
            </div>
          </div>
        </div>
      </div>

      <div class="bsb d-flex">
        <div class="bsb-corner"><div class="c"></div></div>
        <div class="bsb-th"><i></i></div>
        <div class="bsb-end"><i></i></div>
      </div>
    </div>
    <div class="rsb">
      <div class="rsb-in">
        <div class="rsb-top"><div class="tri-up"></div></div>
        <div class="rsb-gr"></div>
        <div class="tri-dn"></div>
      </div>
    </div>
  </div>

  <svg class="overlay" viewBox="0 0 1878 938">
    <polygon points="503,827 956,518 961,508 980,507 969,523 962,526" fill="#ff3b3b"/>
    <polygon points="524,827 811,742 811,737 830,742 815,754 814,751" fill="#ff3b3b"/>
  </svg>
  <div class="note">选择添加-确定</div>
  <div class="wm">https://blog.csdn.net/qq_33970369</div>
</div>
<script src="https://cdn.jsdelivr.net/npm/bootstrap@5.3.0/dist/js/bootstrap.bundle.min.js"></script>
</body>
</html>
